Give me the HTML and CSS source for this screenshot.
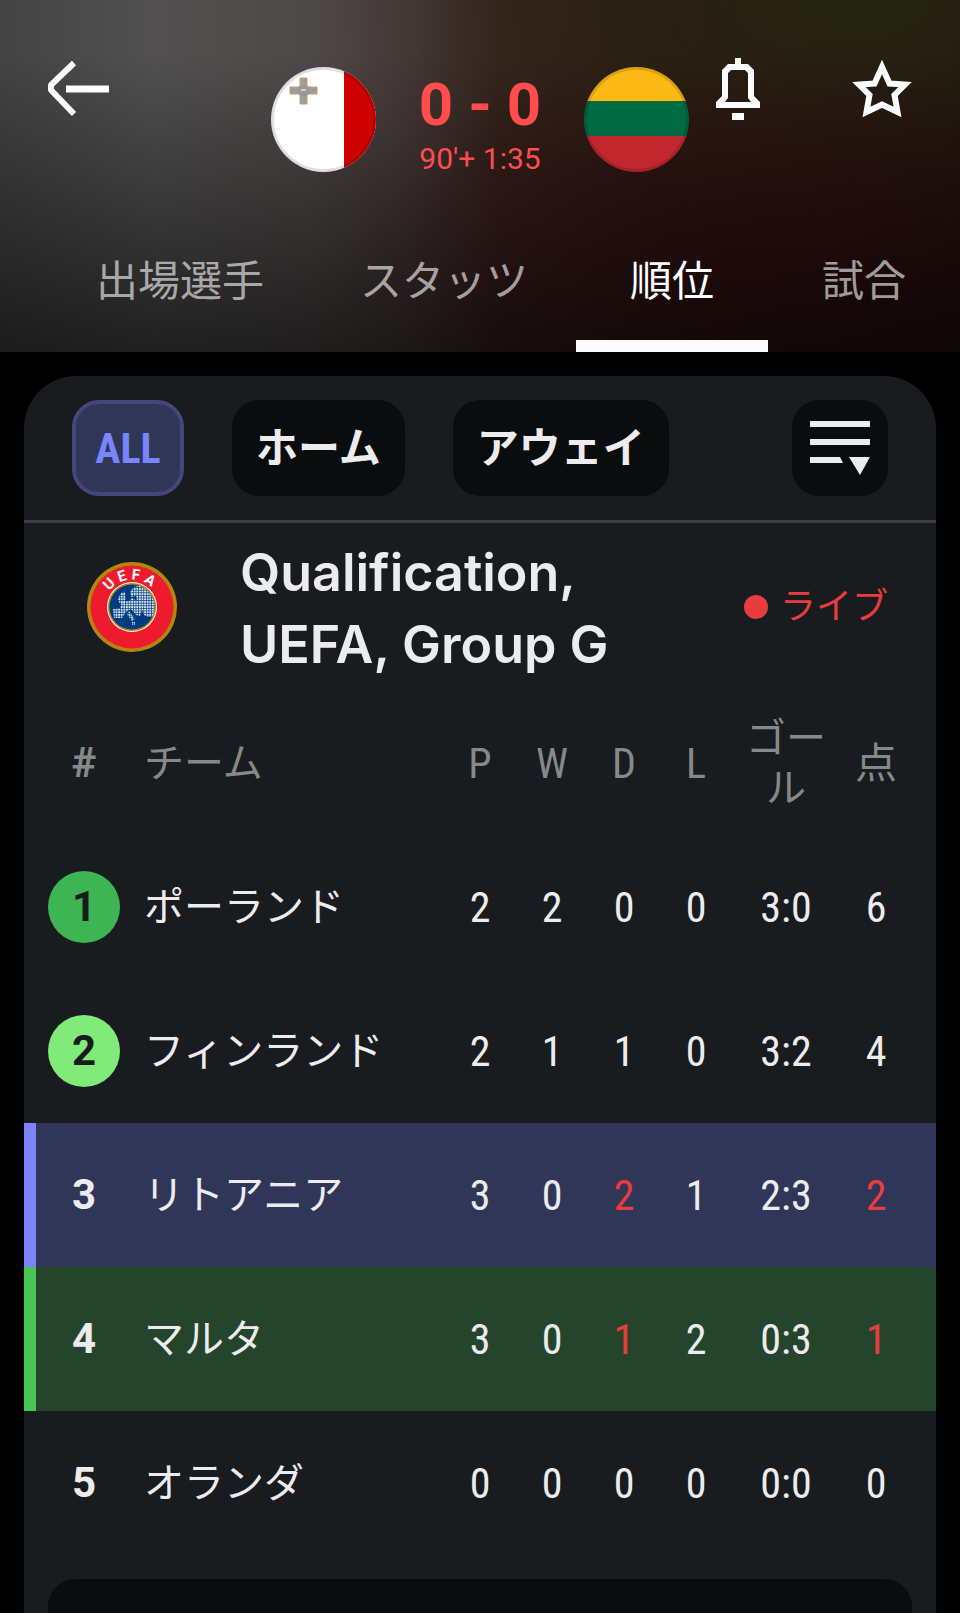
FILE: index.html
```html
<!DOCTYPE html>
<html lang="ja">
<head>
    <meta charset="utf-8">
    <meta name="viewport" content="width=device-width, initial-scale=1">
    <title>マルタ - リトアニア</title>
    <link rel="stylesheet" href="styles.css">
</head>
<body>
    <header class="match-header">
        <div class="top-bar">
            <div class="back">
                <button class="icon-btn" type="button" aria-label="戻る">
                    <svg width="64" height="58" viewBox="0 0 64 58" fill="none" stroke="#fcfcff">
                        <path d="M28 3 L5 25 V30 L28 54" stroke-width="6" stroke-linejoin="round"/>
                        <path d="M20 29 H63" stroke-width="7"/>
                    </svg>
                </button>
            </div>

            <div class="teams">
                <svg class="flag" viewBox="0 0 105 105" role="img" aria-label="マルタ">
                    <defs>
                        <clipPath id="round"><circle cx="52.5" cy="52.5" r="52.5"/></clipPath>
                    </defs>
                    <g clip-path="url(#round)">
                        <rect width="105" height="105" fill="#fff"/>
                        <rect x="73" width="32" height="105" fill="#cf0000"/>
                    </g>
                    <path d="M29 11h7v9h10v7h-10v10h-7v-10h-10v-7h10z" fill="#9d9d9d" stroke="#d39a5c"/>
                    <circle cx="32.5" cy="23.5" r="6" fill="#999"/>
                    <path d="M30 23h5" stroke="#ccc" stroke-width="2"/>
                    <circle cx="52.5" cy="52.5" r="51" fill="none" stroke="#000" stroke-opacity=".13" stroke-width="3"/>
                </svg>
                <div class="score">
                    <strong class="score-value">0 - 0</strong>
                    <span class="score-time">90'+ 1:35</span>
                </div>
                <svg class="flag" viewBox="0 0 105 105" role="img" aria-label="リトアニア">
                    <g clip-path="url(#round)">
                        <rect width="105" height="35" fill="#fdb913"/>
                        <rect y="34" width="105" height="36" fill="#006a44"/>
                        <rect y="69" width="105" height="36" fill="#c1272d"/>
                    </g>
                    <circle cx="52.5" cy="52.5" r="51" fill="none" stroke="#000" stroke-opacity=".13" stroke-width="3"/>
                </svg>
            </div>

            <div class="actions">
                <button class="icon-btn" type="button" aria-label="通知">
                    <svg width="44" height="62" viewBox="0 0 44 62" fill="#fcfcff">
                        <path fill-rule="evenodd" d="M19 0h6v6h7l6 6v26l6 6v6H0v-6l6-6V12l6-6h7zM15 12l-3 3v25l-3 4h26l-3-4V15l-3-3z"/>
                        <path d="M16 55h12v7H16z"/>
                    </svg>
                </button>
                <button class="icon-btn" type="button" aria-label="お気に入り">
                    <svg width="62" height="60" viewBox="0 0 62 60">
                        <path d="M31 8 L38.500 24.500 L54 25.500 L43.500 36 L46.500 53 L31 45.500 L15.500 53 L18.500 36 L8 25.500 L23.500 24.500 Z" fill="none" stroke="#fcfcff" stroke-width="6"/>
                    </svg>
                </button>
            </div>
        </div>

        <nav class="tabs">
            <a class="tab" href="#lineups">出場選手</a>
            <a class="tab" href="#stats">スタッツ</a>
            <a class="tab active-tab" href="#standings">順位</a>
            <a class="tab" href="#matches">試合</a>
        </nav>
    </header>

    <main class="card" id="standings">
        <div class="filters">
            <button class="chip active-chip" type="button">ALL</button>
            <button class="chip" type="button">ホーム</button>
            <button class="chip" type="button">アウェイ</button>
            <button class="chip sort-btn" type="button" aria-label="並べ替え">
                <svg width="60" height="54" viewBox="0 0 60 54" fill="#ececef">
                    <path d="M0 0h60v6H0zM0 18h60v6H0zM0 36h30l3 6H0zM39 36h21L50 54z"/>
                </svg>
            </button>
        </div>

        <div class="group">
            <svg class="group-logo" viewBox="0 0 90 90" role="img" aria-label="UEFA">
                <defs>
                    <pattern id="dots" width="2.600" height="2.600" patternUnits="userSpaceOnUse">
                        <rect width="1.900" height="1.900" fill="#dbe4f0"/>
                    </pattern>
                    <clipPath id="globe"><circle cx="45" cy="45" r="22.500"/></clipPath>
                    <path id="arc" d="M17.500 45a27.500 27.500 0 0 1 55 0"/>
                </defs>
                <circle cx="45" cy="45" r="45" fill="#b3870f"/>
                <circle cx="45" cy="45" r="41.500" fill="#ee1b2e"/>
                <circle cx="45" cy="45" r="25" fill="#fff"/>
                <circle cx="45" cy="45" r="24" fill="#b3870f"/>
                <circle cx="45" cy="45" r="22.500" fill="#003c82"/>
                <g clip-path="url(#globe)" fill="url(#dots)">
                    <path d="M26 47l7-1 2-6 7-1 3-3 5 3-1-5-5 1-1-5 4-5 8-2 15 7v25l-9 0-4-2-2-5-2 6-4-1-5-6-5 3-4 6h-8z"/>
                    <path d="M31 37l3-6 4-1 1 7-1 4-5 1zM42 49l6 8-3 2-5-7zM45 60h3v3h-3z"/>
                </g>
                <text class="logo-text" text-anchor="middle"><textPath href="#arc" startOffset="47%">U E F A</textPath></text>
            </svg>
            <h1 class="group-name">Qualification, UEFA, Group G</h1>
            <span class="live">ライブ</span>
        </div>

        <table class="standings">
            <thead>
                <tr>
                    <th class="rank">#</th>
                    <th class="team">チーム</th>
                    <th>P</th>
                    <th>W</th>
                    <th>D</th>
                    <th>L</th>
                    <th class="goals">ゴール</th>
                    <th class="points">点</th>
                </tr>
            </thead>
            <tbody>
                <tr>
                    <td class="rank"><span class="badge">1</span></td>
                    <td class="team">ポーランド</td>
                    <td>2</td>
                    <td>2</td>
                    <td>0</td>
                    <td>0</td>
                    <td>3:0</td>
                    <td class="points">6</td>
                </tr>
                <tr>
                    <td class="rank"><span class="badge badge-playoff">2</span></td>
                    <td class="team">フィンランド</td>
                    <td>2</td>
                    <td>1</td>
                    <td>1</td>
                    <td>0</td>
                    <td>3:2</td>
                    <td class="points">4</td>
                </tr>
                <tr class="away-row">
                    <td class="rank">3</td>
                    <td class="team">リトアニア</td>
                    <td>3</td>
                    <td>0</td>
                    <td class="changed">2</td>
                    <td>1</td>
                    <td>2:3</td>
                    <td class="points changed">2</td>
                </tr>
                <tr class="home-row">
                    <td class="rank">4</td>
                    <td class="team">マルタ</td>
                    <td>3</td>
                    <td>0</td>
                    <td class="changed">1</td>
                    <td>2</td>
                    <td>0:3</td>
                    <td class="points changed">1</td>
                </tr>
                <tr>
                    <td class="rank">5</td>
                    <td class="team">オランダ</td>
                    <td>0</td>
                    <td>0</td>
                    <td>0</td>
                    <td>0</td>
                    <td>0:0</td>
                    <td class="points">0</td>
                </tr>
            </tbody>
        </table>

        <div class="panel"></div>
    </main>
</body>
</html>
```
FILE: styles.css
```css
* {
    box-sizing: border-box;
}

body {
    margin: 0;
    min-height: 100vh;
    display: flex;
    flex-direction: column;
    background: #000;
    color: #ececef;
    font-family: Roboto, "Noto Sans CJK JP", sans-serif;
    font-size: 42px;
    line-height: 50px;
}

button {
    border: 0;
    padding: 0;
    background: none;
    color: inherit;
    font: inherit;
    cursor: pointer;
}

svg {
    display: block;
}

/* Header with the blurred flag colours behind it */
.match-header {
    background:
        linear-gradient(to bottom, rgba(0, 0, 0, 0) 15%, rgba(0, 0, 0, 0.6) 100%),
        radial-gradient(ellipse 420px 200px at 79% 70%, rgba(58, 12, 16, 0.6), rgba(50, 10, 14, 0)),
        radial-gradient(ellipse 520px 280px at 90% 0%, rgba(38, 38, 18, 0.95), rgba(48, 34, 18, 0)),
        linear-gradient(to right, #444 0%, #525050 16%, #4e4948 32%, #463938 43%, #3a2420 52%, #2e1814 70%, #200f0d 100%);
}

.top-bar {
    display: flex;
    align-items: flex-start;
    height: 208px;
    padding: 53px 42px 0;
}

.icon-btn {
    display: flex;
    align-items: center;
    justify-content: center;
    width: 72px;
    height: 72px;
}

.back,
.actions {
    flex: 1;
}

.actions {
    display: flex;
    justify-content: flex-end;
    gap: 72px;
}

.teams {
    display: flex;
    align-items: flex-start;
    margin-top: 14px;
}

.flag {
    width: 105px;
    height: 105px;
}

.score {
    display: flex;
    flex-direction: column;
    align-items: center;
    width: 208px;
    padding-top: 2px;
    color: #ff4c4c;
}

.score-value {
    font-size: 60px;
    line-height: 72px;
}

.score-time {
    font-size: 30px;
    line-height: 36px;
}

/* Tabs */
.tabs {
    display: flex;
    padding-left: 48px;
    overflow: hidden;
}

.tab {
    flex: none;
    min-width: 192px;
    height: 144px;
    padding: 2px 48px 0;
    border-bottom: 12px solid transparent;
    border-top: 12px solid transparent;
    color: rgba(255, 255, 255, 0.6);
    line-height: 120px;
    text-align: center;
    text-decoration: none;
}

.active-tab {
    border-bottom-color: #fcfcff;
    color: #fff;
}

/* Standings card */
.card {
    flex: 1;
    display: flex;
    flex-direction: column;
    margin: 24px 24px 0;
    border-radius: 52px 52px 0 0;
    background: #181c1f;
}

.filters {
    display: flex;
    gap: 48px;
    padding: 24px 48px;
    border-bottom: 3px solid #3d3e43;
}

.chip {
    height: 96px;
    padding: 2px 24px 0;
    border-radius: 27px;
    background: #0a0d0e;
    font-weight: bold;
}

.active-chip {
    width: 112px;
    border: 4px solid #42477c;
    padding: 2px 0 0;
    background: #303657;
    color: #7a84ff;
    font-family: "Roboto Condensed", Roboto, sans-serif;
}

.sort-btn {
    width: 96px;
    margin-left: auto;
    padding: 0 18px;
}

.group {
    display: flex;
    align-items: center;
    min-height: 168px;
    padding: 0 48px 0 63px;
}

.group-logo {
    flex: none;
    width: 90px;
    height: 90px;
}

.logo-text {
    fill: #fff;
    font-size: 15px;
    font-weight: bold;
}

.group-name {
    flex: 1;
    max-width: 440px;
    margin: 0 0 0 63px;
    padding-top: 4px;
    font-family: Inter, sans-serif;
    font-size: 52px;
    font-weight: 600;
    line-height: 72px;
}

.live {
    display: flex;
    align-items: center;
    gap: 12px;
    margin-left: auto;
    color: #e93c3c;
    font-size: 36px;
}

.live::before {
    content: "";
    width: 24px;
    height: 24px;
    border-radius: 50%;
    background: #e93c3c;
}

/* Standings table */
.standings {
    width: 100%;
    table-layout: fixed;
    border-collapse: collapse;
    font-family: "Roboto Condensed", Roboto, "Noto Sans CJK JP", sans-serif;
    text-align: center;
}

.standings tr {
    height: 144px;
}

.standings th,
.standings td {
    width: 72px;
    padding: 2px 0 0;
    font-weight: normal;
}

.standings th {
    color: #868989;
}

.standings .rank {
    width: 120px;
    padding: 0;
    font-family: Roboto, sans-serif;
    font-weight: bold;
}

.standings .team {
    width: auto;
    text-align: left;
    font-size: 40px;
}

.standings .goals {
    width: 108px;
    font-size: 40px;
}

.standings .points {
    width: 96px;
    padding-right: 24px;
}

.badge {
    display: block;
    width: 72px;
    margin: 0 auto;
    border-radius: 50%;
    background: #3cb552;
    color: #181c1f;
    line-height: 72px;
}

.badge-playoff {
    background: #80eb78;
}

.away-row {
    background: linear-gradient(to right, #7a84ff 12px, #303657 12px);
}

.home-row {
    background: linear-gradient(to right, #48c555 12px, #24452c 12px);
}

.changed {
    color: #e93c3c;
}

.panel {
    flex: 1;
    min-height: 34px;
    margin: 24px 24px 0;
    border-radius: 27px 27px 0 0;
    background: #0a0d0e;
}
```
